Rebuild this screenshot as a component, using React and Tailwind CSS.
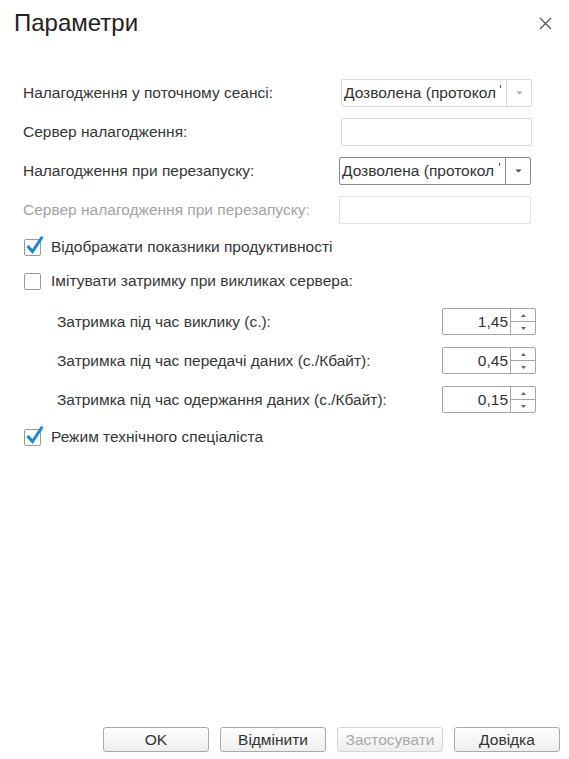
import React from "react";

const font = { fontFamily: '"Liberation Sans", Arial, sans-serif' };

function Combo({ dark }) {
  return (
    <div
      className={`flex h-[28px] w-full rounded-[2px] border bg-white ${
        dark ? "border-[#8a8a8a]" : "border-[#d9d9d9]"
      }`}
    >
      <div className="flex flex-1 items-start overflow-hidden whitespace-nowrap pl-[2px] text-[15.5px] leading-[26px] text-[#333]">
        <span>Дозволена (протокол</span>
        <span className="ml-auto mr-[5px] mt-[5px] h-[3px] w-[1px] bg-[#555]" />
      </div>
      <div
        className={`flex w-[25px] items-center justify-center border-l ${
          dark ? "border-[#8a8a8a]" : "border-[#d9d9d9]"
        }`}
      >
        <svg width="7" height="4" viewBox="0 0 7 4">
          <path d="M0.5 0.5 L6.5 0.5 L3.5 3.5 Z" fill={dark ? "#444" : "#aaa"} />
        </svg>
      </div>
    </div>
  );
}

function Input({ light }) {
  return (
    <div
      className={`h-[28px] w-full rounded-[2px] border bg-white ${
        light ? "border-[#e0e0e0]" : "border-[#d9d9d9]"
      }`}
    />
  );
}

function Checkbox({ checked }) {
  return (
    <div className="relative h-[17px] w-[17px] shrink-0 rounded-[2px] border border-[#9a9a9a] bg-white">
      {checked && (
        <svg
          className="absolute left-[1px] top-[-4px]"
          width="18"
          height="19"
          viewBox="0 0 18 19"
        >
          <path
            d="M2.5 11 L6.5 15.5 L15.5 2"
            fill="none"
            stroke="#1a87d2"
            strokeWidth="3"
            strokeLinecap="square"
          />
        </svg>
      )}
    </div>
  );
}

function Spin({ value }) {
  return (
    <div className="flex h-[27px] w-[94px] rounded-[2px] border border-[#a6a6a6] bg-white">
      <div className="flex-1 pr-[2px] text-right text-[15.5px] leading-[25px] text-[#333]">
        {value}
      </div>
      <div className="flex w-[25px] flex-col border-l border-[#a6a6a6]">
        <div className="flex flex-1 items-center justify-center border-b border-[#a6a6a6]">
          <svg width="5" height="3" viewBox="0 0 5 3">
            <path d="M0 3 L5 3 L2.5 0 Z" fill="#666" />
          </svg>
        </div>
        <div className="flex flex-1 items-center justify-center">
          <svg width="5" height="3" viewBox="0 0 5 3">
            <path d="M0 0 L5 0 L2.5 3 Z" fill="#666" />
          </svg>
        </div>
      </div>
    </div>
  );
}

function Button({ children, disabled }) {
  return (
    <div
      className={`flex h-[25px] w-[106px] items-center justify-center rounded-[3px] border bg-gradient-to-b from-white to-[#eeeeee] text-[15.5px] ${
        disabled
          ? "border-[#d6d6d6] text-[#a8a8a8]"
          : "border-[#a9a9a9] text-[#333]"
      }`}
    >
      {children}
    </div>
  );
}

export default function App() {
  return (
    <div
      className="flex h-[759px] w-[569px] flex-col bg-white text-[#363636]"
      style={font}
    >
      <div className="flex h-[46px] items-center justify-between pl-[14px] pr-[17px]">
        <div className="text-[24px] text-[#222]">Параметри</div>
        <svg width="13" height="13" viewBox="0 0 13 13">
          <path
            d="M1 1 L12 12 M12 1 L1 12"
            stroke="#555"
            strokeWidth="1.3"
          />
        </svg>
      </div>

      <div className="flex flex-col pl-[23px] text-[15.5px]">
        <div className="mt-[33px] flex h-[28px] items-center">
          <div className="w-[318px]">Налагодження у поточному сеансі:</div>
          <div className="w-[191px]">
            <Combo />
          </div>
        </div>
        <div className="mt-[11px] flex h-[28px] items-center">
          <div className="w-[318px]">Сервер налагодження:</div>
          <div className="w-[191px]">
            <Input />
          </div>
        </div>
        <div className="mt-[11px] flex h-[28px] items-center">
          <div className="w-[316px]">Налагодження при перезапуску:</div>
          <div className="w-[192px]">
            <Combo dark />
          </div>
        </div>
        <div className="mt-[11px] flex h-[28px] items-center">
          <div className="w-[316px] text-[#a3a3a3]">
            Сервер налагодження при перезапуску:
          </div>
          <div className="w-[192px]">
            <Input light />
          </div>
        </div>

        <div className="mt-[11px] flex h-[24px] items-center gap-[10px] pl-[1px]">
          <Checkbox checked />
          <div>Відображати показники продуктивності</div>
        </div>
        <div className="mt-[10px] flex h-[24px] items-center gap-[10px] pl-[1px]">
          <Checkbox />
          <div>Імітувати затримку при викликах сервера:</div>
        </div>

        <div className="mt-[15px] flex h-[27px] items-center pl-[34px]">
          <div className="w-[385px]">Затримка під час виклику (с.):</div>
          <Spin value="1,45" />
        </div>
        <div className="mt-[12px] flex h-[27px] items-center pl-[34px]">
          <div className="w-[385px]">
            Затримка під час передачі даних (с./Кбайт):
          </div>
          <Spin value="0,45" />
        </div>
        <div className="mt-[12px] flex h-[27px] items-center pl-[34px]">
          <div className="w-[385px]">
            Затримка під час одержання даних (с./Кбайт):
          </div>
          <Spin value="0,15" />
        </div>

        <div className="mt-[12px] flex h-[24px] items-center gap-[10px] pl-[1px]">
          <Checkbox checked />
          <div>Режим технічного спеціаліста</div>
        </div>
      </div>

      <div className="mt-auto flex justify-end gap-[11px] pb-[7px] pr-[9px]">
        <Button>OK</Button>
        <Button>Відмінити</Button>
        <Button disabled>Застосувати</Button>
        <Button>Довідка</Button>
      </div>
    </div>
  );
}
